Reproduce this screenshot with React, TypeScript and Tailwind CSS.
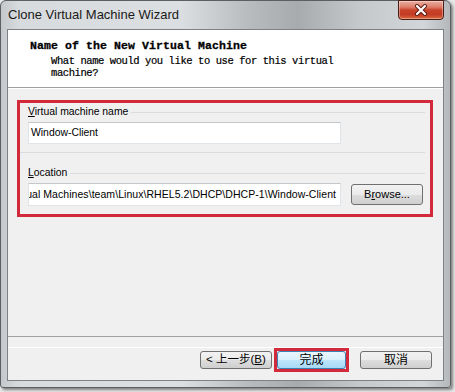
import React from "react";

const ui = { fontFamily: '"Liberation Sans", Arial, sans-serif' };
const cjk = { fontFamily: '"Liberation Sans", "Noto Sans CJK SC", sans-serif' };
const mono = { fontFamily: '"Liberation Mono", "Courier New", monospace' };

function WinButton({
  children,
  className = "",
  focused = false,
}: {
  children: React.ReactNode;
  className?: string;
  focused?: boolean;
}) {
  return (
    <div
      className={
        "flex items-center justify-center whitespace-nowrap rounded-[3px] border text-black " +
        (focused
          ? "border-[#3c7fb1] bg-[linear-gradient(180deg,#eaf6fd_0%,#d9f0fc_50%,#bee6fd_51%,#a7d9f5_100%)] "
          : "border-[#707070] bg-[linear-gradient(180deg,#f2f2f2_0%,#ebebeb_50%,#dddddd_51%,#cfcfcf_100%)] ") +
        className
      }
      style={cjk}
    >
      {children}
    </div>
  );
}

function GroupLabel({ children }: { children: React.ReactNode }) {
  return (
    <div className="flex h-[16px] items-center pl-[8px] pr-[5px]">
      <span className="text-[10.4px] leading-none text-black" style={ui}>
        {children}
      </span>
      <div className="ml-[3px] h-px flex-1 bg-[#d9dde0]" />
    </div>
  );
}

export default function App() {
  return (
    <div className="h-[392px] w-[455px] overflow-hidden bg-[#e9e9e9]">
      <div className="relative flex h-[388px] w-[451px] flex-col rounded-t-[6px] rounded-b-[3px] border border-[#5b5f63] bg-[linear-gradient(90deg,#c4c8cb_0%,#d8dbdd_4%,#dcdfe1_40%,#b9bcbe_55%,#a8abad_66%,#c6c9cb_80%,#d3d6d8_94%,#b4b8bb_100%)] px-[6px] pb-[6px] shadow-[2px_2px_3px_rgba(0,0,0,0.45)]">
        {/* title bar */}
        <div className="flex h-[28px] items-center pl-[1px]">
          <span className="text-[13px] text-[#1a1a1a]" style={ui}>
            Clone Virtual Machine Wizard
          </span>
        </div>
        {/* close button */}
        <div className="absolute right-[6px] top-[-1px] flex h-[20px] w-[46px] items-center justify-center rounded-b-[4px] border border-[#4a1d16] bg-[linear-gradient(180deg,#eab1a3_0%,#dd7a66_35%,#c9442b_50%,#c23b24_75%,#dc6a3c_100%)] shadow-[inset_0_0_0_1px_rgba(255,255,255,0.35)]">
          <svg width="14" height="12" viewBox="0 0 14 12">
            <path d="M3 2 L11 10 M11 2 L3 10" stroke="#5a1a10" strokeWidth="4" strokeLinecap="round" />
            <path d="M3 2 L11 10 M11 2 L3 10" stroke="#ffffff" strokeWidth="2.2" strokeLinecap="round" />
          </svg>
        </div>
        {/* client area */}
        <div className="flex flex-1 flex-col border border-[#7d8185] bg-[#f0f0f0]">
          {/* header */}
          <div className="h-[58px] border-b border-[#a0a0a0] bg-white pl-[22px] pt-[9px]">
            <div
              className="text-[11.5px] font-bold leading-[13px] tracking-[0.1px] text-black [-webkit-text-stroke:0.3px_black]"
              style={mono}
            >
              Name of the New Virtual Machine
            </div>
            <div
              className="mt-[3px] pl-[21px] text-[10.5px] leading-[12px] tracking-[-0.42px] text-black [-webkit-text-stroke:0.2px_black]"
              style={mono}
            >
              What name would you like to use for this virtual
              <br />
              machine?
            </div>
          </div>
          {/* body */}
          <div className="flex-1 border-t border-white pl-[9px] pt-[11px]">
            <div className="w-[416px] border-[3px] border-[#d22a3a] pb-[8px] pt-[1px]">
              <GroupLabel>
                <span className="underline">V</span>irtual machine name
              </GroupLabel>
              <div className="ml-[8px] mt-[2px] flex h-[22px] w-[313px] items-center border border-[#dfe4e8] border-t-[#c3c8cd] bg-white pl-[2px] text-[10.4px] text-black" style={ui}>
                Window-Client
              </div>
              <div className="mr-[5px] mt-[8px] h-px bg-[#d9dde0]" />
              <div className="mt-[12px]">
                <GroupLabel>
                  <span className="underline">L</span>ocation
                </GroupLabel>
              </div>
              <div className="ml-[8px] mt-[2px] flex items-center">
                <div
                  className="flex h-[23px] w-[313px] items-center justify-end overflow-hidden whitespace-nowrap border border-[#dfe4e8] border-t-[#c3c8cd] bg-white pr-[4px] text-[10.5px] tracking-[0.05px] text-black"
                  style={ui}
                >
                  C:\Documents and Settings\Administrator\My Documents\My Virtual Machines\team\Linux\RHEL5.2\DHCP\DHCP-1\Window-Client
                </div>
                <WinButton className="ml-[10px] h-[21px] w-[72px] text-[11px]">
                  <span style={ui}>
                    B<span className="underline">r</span>owse...
                  </span>
                </WinButton>
              </div>
            </div>
          </div>
          {/* footer */}
          <div className="h-[44px] border-t border-[#a0a0a0] pt-[10px]">
            <div className="flex items-center justify-end border-t border-white pr-[11px]">
              <WinButton className="h-[18px] w-[72px] text-[11.5px]">
                &lt; 上一步(<span className="underline">B</span>)
              </WinButton>
              <div className="ml-[2px] border-[3px] border-[#d22a3a]">
                <WinButton focused className="h-[18px] w-[69px] text-[12px]">
                  完成
                </WinButton>
              </div>
              <WinButton className="ml-[11px] h-[18px] w-[72px] text-[12px]">取消</WinButton>
            </div>
          </div>
        </div>
      </div>
    </div>
  );
}
